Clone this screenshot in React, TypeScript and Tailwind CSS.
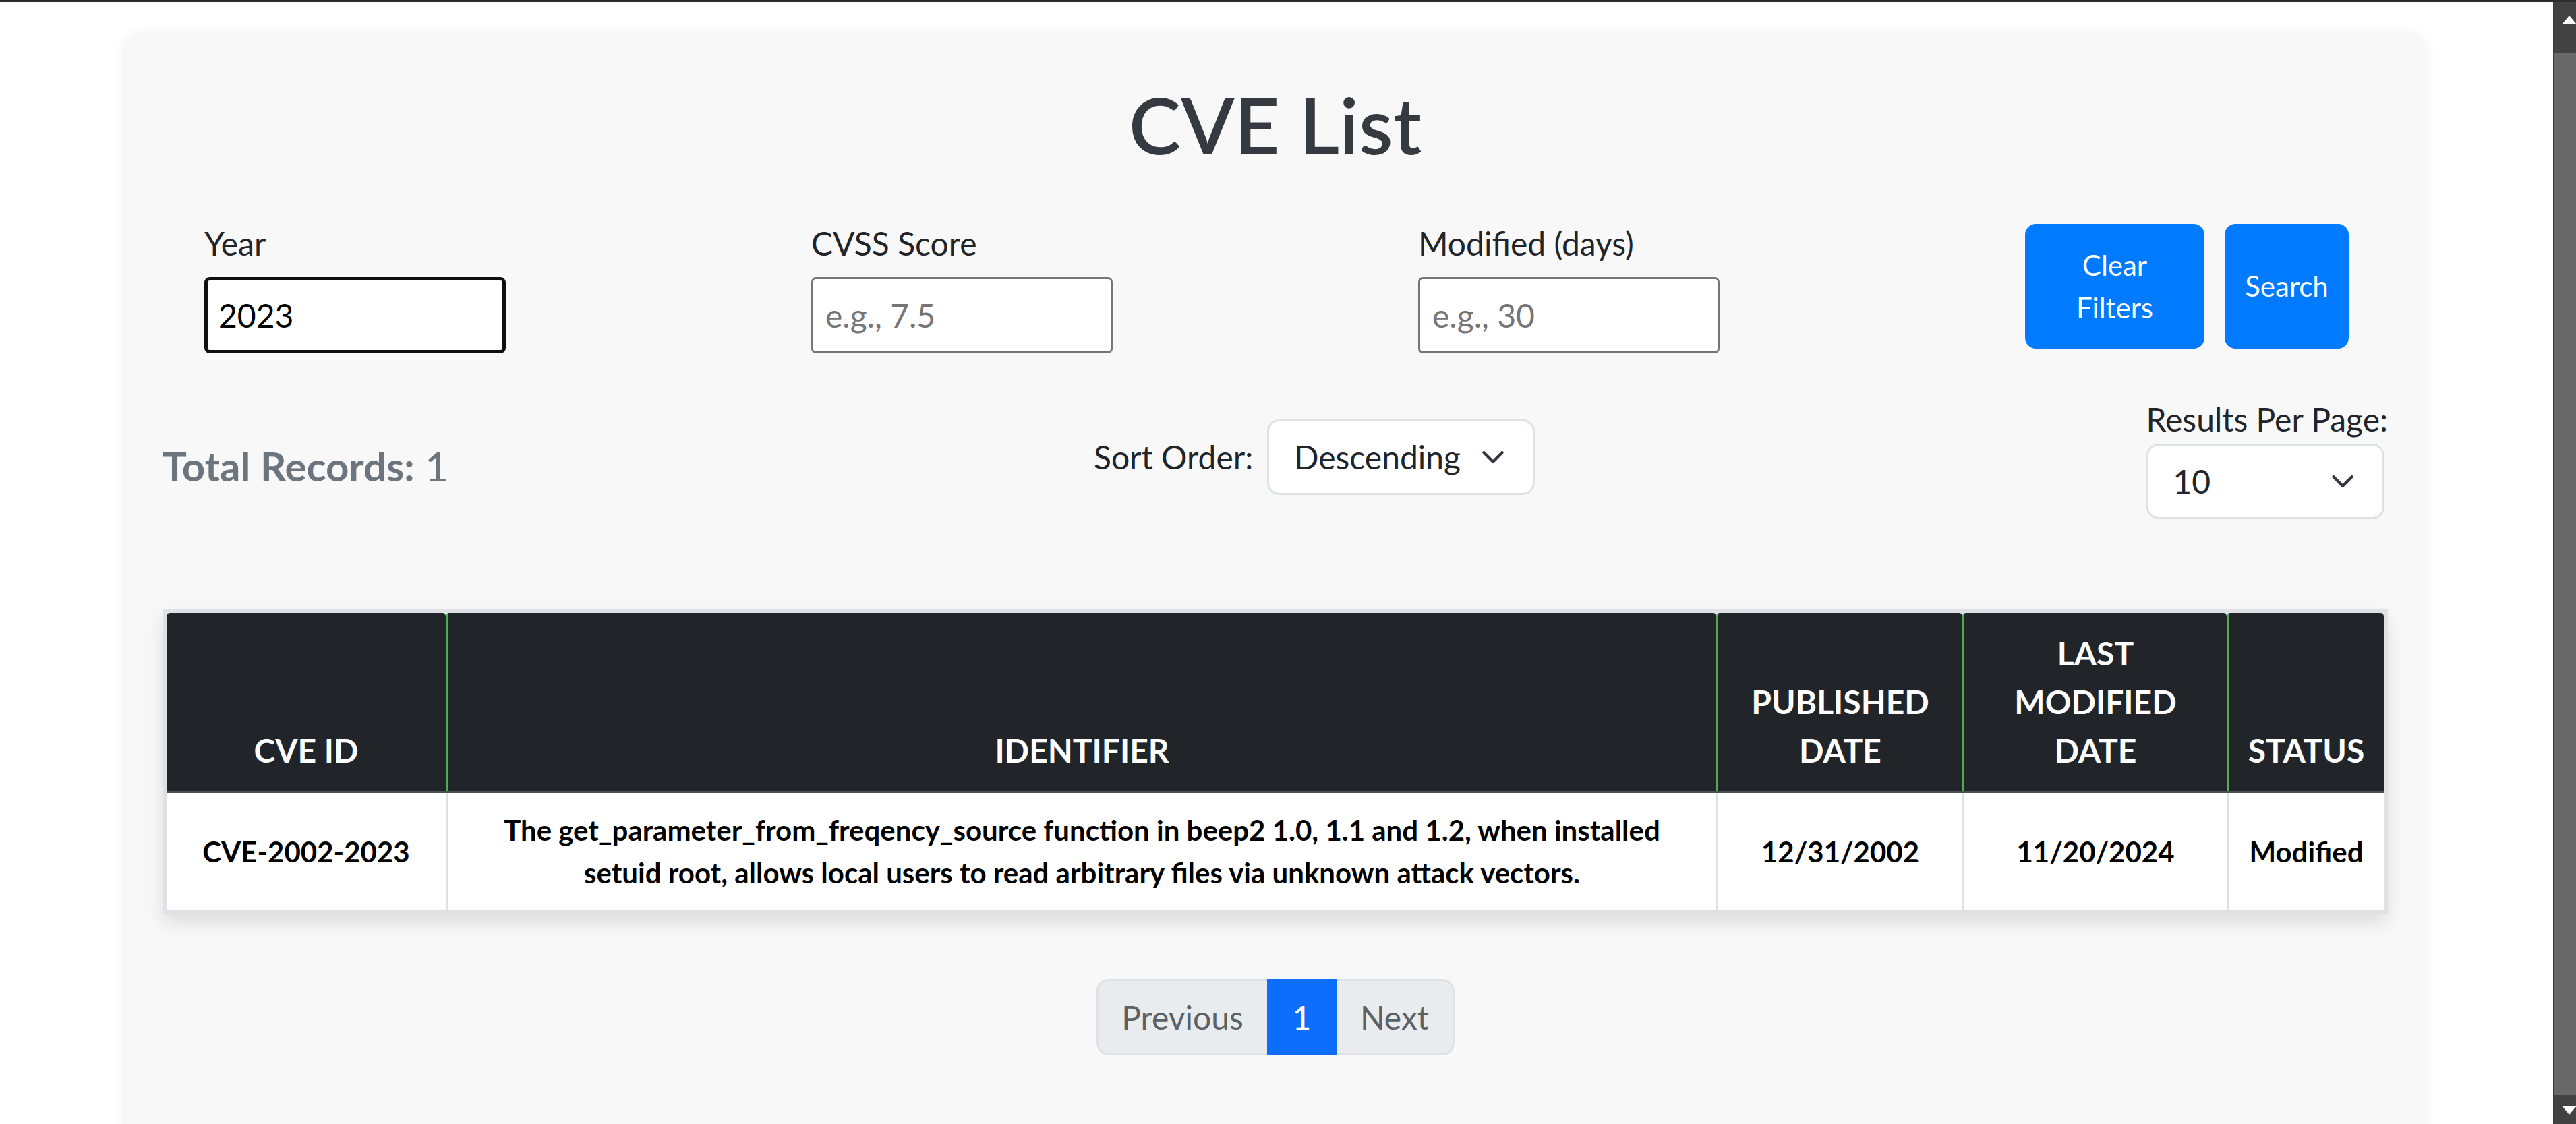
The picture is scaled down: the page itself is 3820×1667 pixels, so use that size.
const filters = [
  { label: "Year", placeholder: "", value: "2023", focused: true },
  { label: "CVSS Score", placeholder: "e.g., 7.5", value: "", focused: false },
  { label: "Modified (days)", placeholder: "e.g., 30", value: "", focused: false },
];

const cols = ["414px", "1884px", "365px", "392px", "233px"];

function Chevron() {
  return (
    <svg width="36" height="36" viewBox="0 0 16 16" className="shrink-0">
      <path d="m2 5 6 6 6-6" fill="none" stroke="#343a40" strokeWidth={2} strokeLinecap="round" strokeLinejoin="round" />
    </svg>
  );
}

function FakeSelect({ value, width }: { value: string; width: string }) {
  return (
    <div className={`${width} h-[112px] flex items-center justify-between pl-[37px] pr-[41px] bg-white border-[3px] border-[#dee2e6] rounded-[18px] text-[48px] leading-[72px] text-[#212529]`}>
      <span>{value}</span>
      <Chevron />
    </div>
  );
}

export default function App() {
  return (
    <div className="h-[1667px] overflow-hidden bg-white flex flex-col [font-family:Lato,sans-serif]">
      {/* window top edge */}
      <div className="h-[3px] bg-[#2d2d30] shrink-0" />

      <div className="flex flex-1 min-h-0">
        <main className="flex-1 min-w-0 overflow-hidden">
          <div className="ml-[181px] mt-[44px] w-[3420px] h-[1700px] bg-[#f8f8f8] rounded-[30px] shadow-[0_0_18px_rgba(0,0,0,0.04)] px-[60px] pt-[60px]">
            <h1 className="mt-[8px] h-[139px] text-center text-[116px] leading-[139px] font-semibold text-[#343a40]">
              CVE List
            </h1>

            {/* Filters */}
            <div className="mt-[71px] pl-[62px] grid grid-cols-[900px_900px_900px_auto] items-center">
              {filters.map((f) => (
                <div key={f.label} className="flex flex-col">
                  <label className="text-[48px] leading-[72px] text-[#212529] mb-[14px]">{f.label}</label>
                  <input
                    type="text"
                    defaultValue={f.value}
                    placeholder={f.placeholder}
                    className={
                      f.focused
                        ? "w-[447px] h-[113px] bg-white border-[5px] border-[#101010] rounded-[8px] pl-[16px] text-[48px] text-black outline-none"
                        : "w-[447px] h-[113px] bg-white border-[3px] border-[#767676] rounded-[7px] pl-[18px] text-[48px] text-black outline-none placeholder:text-[#757575]"
                    }
                  />
                </div>
              ))}
              <div className="flex gap-[30px]">
                <button className="w-[266px] h-[185px] bg-[#007bff] text-white rounded-[16px] text-[42px] leading-[63px]">
                  Clear
                  <br />
                  Filters
                </button>
                <button className="w-[184px] h-[185px] bg-[#007bff] text-white rounded-[16px] text-[42px] leading-[63px]">
                  Search
                </button>
              </div>
            </div>

            {/* Summary / sort / page size */}
            <div className="mt-[62px] flex items-start">
              <h5 className="w-[1381px] mt-[69px] text-[60px] leading-[72px] text-[#6c757d]">
                <span className="font-bold">Total Records:</span> 1
              </h5>
              <div className="mt-[36px] flex items-center">
                <span className="w-[257px] text-[48px] leading-[72px] text-[#212529]">Sort Order:</span>
                <FakeSelect value="Descending" width="w-[397px]" />
              </div>
              <div className="ml-auto flex flex-col">
                <span className="text-[48px] leading-[72px] text-[#212529]">Results Per Page:</span>
                <FakeSelect value="10" width="w-[353px]" />
              </div>
            </div>

            {/* Table */}
            <div className="mt-[133px] w-[3300px] border-[6px] border-[#dee2e6] bg-[#dee2e6] shadow-[0_14px_26px_rgba(0,0,0,0.1)]">
              <div
                className="grid border-b-[3px] border-[#4d5154] bg-[#dee2e6]"
                style={{ gridTemplateColumns: cols.join(" ") }}
              >
                {[["CVE ID"], ["IDENTIFIER"], ["PUBLISHED", "DATE"], ["LAST", "MODIFIED", "DATE"], ["STATUS"]].map((h, i) => (
                  <div
                    key={i}
                    className={`h-[264px] flex items-end justify-center text-center pb-[24px] px-[24px] bg-[#212529] rounded-t-[5px] text-white font-bold text-[48px] leading-[72px] ${i > 0 ? "border-l-[3px] border-[#4caf50]" : ""}`}
                  >
                    <div>
                      {h.map((line, j) => (
                        <div key={j}>{line}</div>
                      ))}
                    </div>
                  </div>
                ))}
              </div>
              <div className="grid" style={{ gridTemplateColumns: cols.join(" ") }}>
                {[
                  ["CVE-2002-2023"],
                  [
                    "The get_parameter_from_freqency_source function in beep2 1.0, 1.1 and 1.2, when installed",
                    "setuid root, allows local users to read arbitrary files via unknown attack vectors.",
                  ],
                  ["12/31/2002"],
                  ["11/20/2024"],
                  ["Modified"],
                ].map((c, i) => (
                  <div
                    key={i}
                    className={`h-[174px] flex items-center justify-center text-center px-[24px] bg-white text-black font-bold text-[42px] leading-[63px] ${i > 0 ? "border-l-[3px] border-[#dee2e6]" : ""}`}
                  >
                    <div>
                      {c.map((line, j) => (
                        <div key={j} className="whitespace-nowrap">{line}</div>
                      ))}
                    </div>
                  </div>
                ))}
              </div>
            </div>

            {/* Pagination */}
            <div className="mt-[96px] flex justify-center text-[48px] leading-[72px]">
              <div className="w-[253px] h-[113px] flex items-center justify-center bg-[#e9ecef] border-[3px] border-r-0 border-[#dee2e6] rounded-l-[18px] text-[#5c6166]">
                Previous
              </div>
              <div className="w-[104px] h-[113px] flex items-center justify-center bg-[#0d6efd] border-[3px] border-[#0d6efd] text-white">
                1
              </div>
              <div className="w-[174px] h-[113px] flex items-center justify-center bg-[#e9ecef] border-[3px] border-l-0 border-[#dee2e6] rounded-r-[18px] text-[#5c6166]">
                Next
              </div>
            </div>
          </div>
        </main>

        {/* Scrollbar */}
        <div className="w-[34px] shrink-0 flex flex-col bg-[#686868] border-l-2 border-[#3a3a3a]">
          <div className="h-[76px] bg-[#424242] pl-[11px] pt-[20px]">
            <div className="w-0 h-0 border-l-[11px] border-r-[11px] border-b-[13px] border-l-transparent border-r-transparent border-b-white" />
          </div>
          <div className="flex-1" />
          <div className="h-[43px] bg-[#424242] pl-[11px] pt-[16px]">
            <div className="w-0 h-0 border-l-[11px] border-r-[11px] border-t-[13px] border-l-transparent border-r-transparent border-t-white" />
          </div>
        </div>
      </div>
    </div>
  );
}
